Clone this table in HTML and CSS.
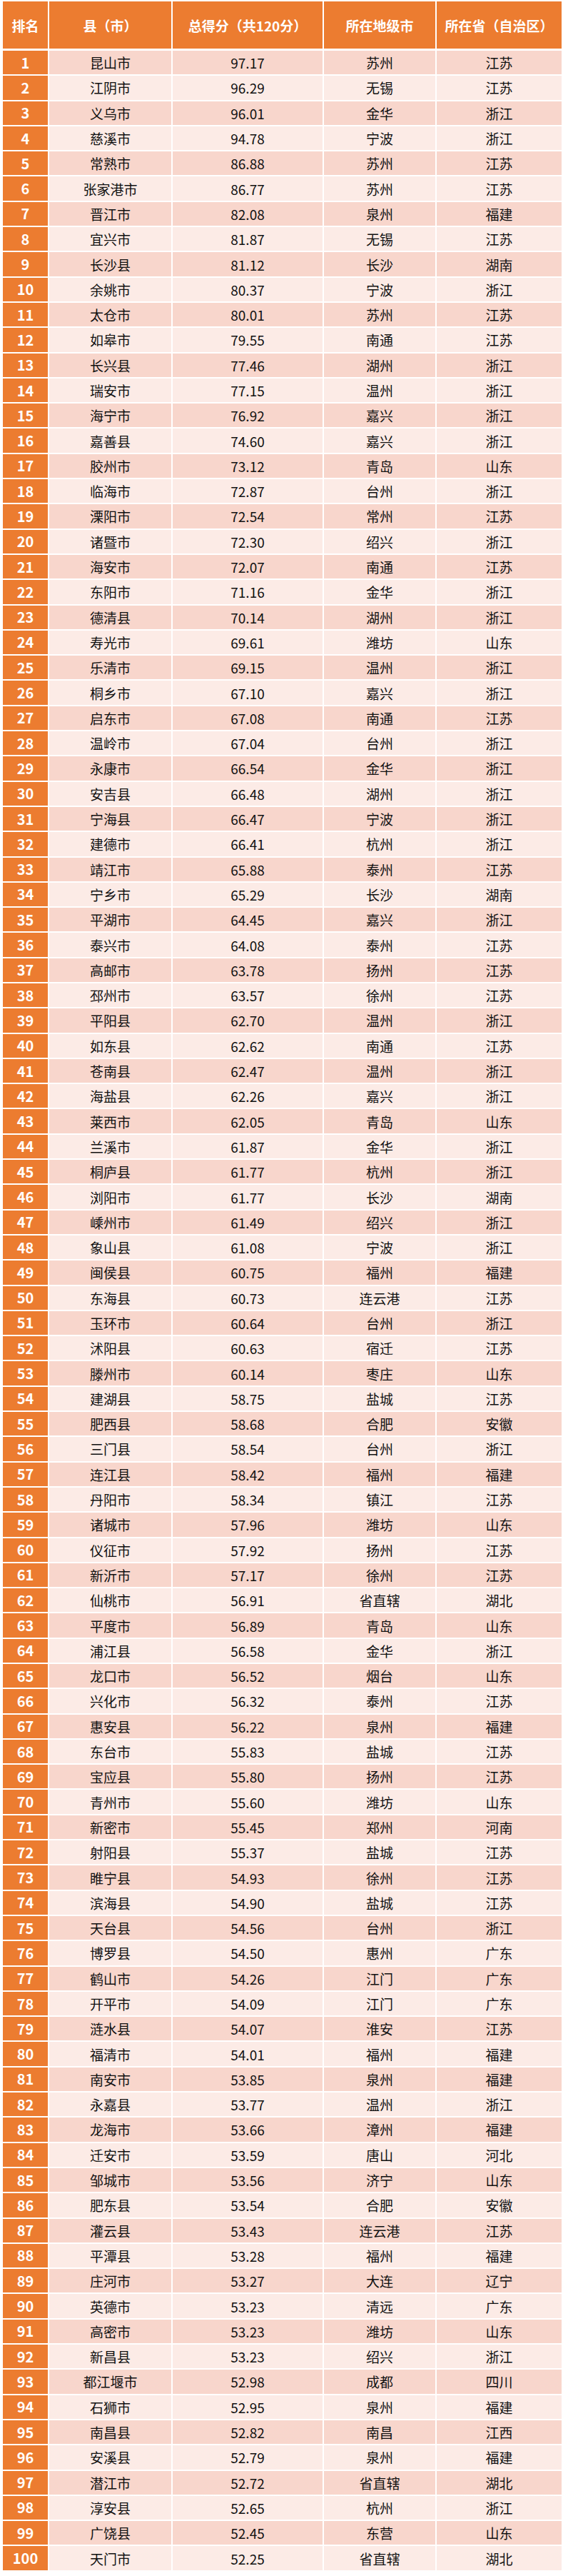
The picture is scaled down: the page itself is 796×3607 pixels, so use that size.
FILE: index.html
```html
<!DOCTYPE html>
<html lang="zh-CN">
<head>
<meta charset="utf-8">
<title>百强县排名</title>
<link rel="stylesheet" href="styles.css">
</head>
<body>
<div class="table">
<div class="row head"><div class="c">排名</div><div class="c">县（市）</div><div class="c">总得分（共120分）</div><div class="c">所在地级市</div><div class="c">所在省（自治区）</div></div>
<div class="row"><div class="c rank">1</div><div class="c">昆山市</div><div class="c">97.17</div><div class="c">苏州</div><div class="c">江苏</div></div>
<div class="row"><div class="c rank">2</div><div class="c">江阴市</div><div class="c">96.29</div><div class="c">无锡</div><div class="c">江苏</div></div>
<div class="row"><div class="c rank">3</div><div class="c">义乌市</div><div class="c">96.01</div><div class="c">金华</div><div class="c">浙江</div></div>
<div class="row"><div class="c rank">4</div><div class="c">慈溪市</div><div class="c">94.78</div><div class="c">宁波</div><div class="c">浙江</div></div>
<div class="row"><div class="c rank">5</div><div class="c">常熟市</div><div class="c">86.88</div><div class="c">苏州</div><div class="c">江苏</div></div>
<div class="row"><div class="c rank">6</div><div class="c">张家港市</div><div class="c">86.77</div><div class="c">苏州</div><div class="c">江苏</div></div>
<div class="row"><div class="c rank">7</div><div class="c">晋江市</div><div class="c">82.08</div><div class="c">泉州</div><div class="c">福建</div></div>
<div class="row"><div class="c rank">8</div><div class="c">宜兴市</div><div class="c">81.87</div><div class="c">无锡</div><div class="c">江苏</div></div>
<div class="row"><div class="c rank">9</div><div class="c">长沙县</div><div class="c">81.12</div><div class="c">长沙</div><div class="c">湖南</div></div>
<div class="row"><div class="c rank">10</div><div class="c">余姚市</div><div class="c">80.37</div><div class="c">宁波</div><div class="c">浙江</div></div>
<div class="row"><div class="c rank">11</div><div class="c">太仓市</div><div class="c">80.01</div><div class="c">苏州</div><div class="c">江苏</div></div>
<div class="row"><div class="c rank">12</div><div class="c">如皋市</div><div class="c">79.55</div><div class="c">南通</div><div class="c">江苏</div></div>
<div class="row"><div class="c rank">13</div><div class="c">长兴县</div><div class="c">77.46</div><div class="c">湖州</div><div class="c">浙江</div></div>
<div class="row"><div class="c rank">14</div><div class="c">瑞安市</div><div class="c">77.15</div><div class="c">温州</div><div class="c">浙江</div></div>
<div class="row"><div class="c rank">15</div><div class="c">海宁市</div><div class="c">76.92</div><div class="c">嘉兴</div><div class="c">浙江</div></div>
<div class="row"><div class="c rank">16</div><div class="c">嘉善县</div><div class="c">74.60</div><div class="c">嘉兴</div><div class="c">浙江</div></div>
<div class="row"><div class="c rank">17</div><div class="c">胶州市</div><div class="c">73.12</div><div class="c">青岛</div><div class="c">山东</div></div>
<div class="row"><div class="c rank">18</div><div class="c">临海市</div><div class="c">72.87</div><div class="c">台州</div><div class="c">浙江</div></div>
<div class="row"><div class="c rank">19</div><div class="c">溧阳市</div><div class="c">72.54</div><div class="c">常州</div><div class="c">江苏</div></div>
<div class="row"><div class="c rank">20</div><div class="c">诸暨市</div><div class="c">72.30</div><div class="c">绍兴</div><div class="c">浙江</div></div>
<div class="row"><div class="c rank">21</div><div class="c">海安市</div><div class="c">72.07</div><div class="c">南通</div><div class="c">江苏</div></div>
<div class="row"><div class="c rank">22</div><div class="c">东阳市</div><div class="c">71.16</div><div class="c">金华</div><div class="c">浙江</div></div>
<div class="row"><div class="c rank">23</div><div class="c">德清县</div><div class="c">70.14</div><div class="c">湖州</div><div class="c">浙江</div></div>
<div class="row"><div class="c rank">24</div><div class="c">寿光市</div><div class="c">69.61</div><div class="c">潍坊</div><div class="c">山东</div></div>
<div class="row"><div class="c rank">25</div><div class="c">乐清市</div><div class="c">69.15</div><div class="c">温州</div><div class="c">浙江</div></div>
<div class="row"><div class="c rank">26</div><div class="c">桐乡市</div><div class="c">67.10</div><div class="c">嘉兴</div><div class="c">浙江</div></div>
<div class="row"><div class="c rank">27</div><div class="c">启东市</div><div class="c">67.08</div><div class="c">南通</div><div class="c">江苏</div></div>
<div class="row"><div class="c rank">28</div><div class="c">温岭市</div><div class="c">67.04</div><div class="c">台州</div><div class="c">浙江</div></div>
<div class="row"><div class="c rank">29</div><div class="c">永康市</div><div class="c">66.54</div><div class="c">金华</div><div class="c">浙江</div></div>
<div class="row"><div class="c rank">30</div><div class="c">安吉县</div><div class="c">66.48</div><div class="c">湖州</div><div class="c">浙江</div></div>
<div class="row"><div class="c rank">31</div><div class="c">宁海县</div><div class="c">66.47</div><div class="c">宁波</div><div class="c">浙江</div></div>
<div class="row"><div class="c rank">32</div><div class="c">建德市</div><div class="c">66.41</div><div class="c">杭州</div><div class="c">浙江</div></div>
<div class="row"><div class="c rank">33</div><div class="c">靖江市</div><div class="c">65.88</div><div class="c">泰州</div><div class="c">江苏</div></div>
<div class="row"><div class="c rank">34</div><div class="c">宁乡市</div><div class="c">65.29</div><div class="c">长沙</div><div class="c">湖南</div></div>
<div class="row"><div class="c rank">35</div><div class="c">平湖市</div><div class="c">64.45</div><div class="c">嘉兴</div><div class="c">浙江</div></div>
<div class="row"><div class="c rank">36</div><div class="c">泰兴市</div><div class="c">64.08</div><div class="c">泰州</div><div class="c">江苏</div></div>
<div class="row"><div class="c rank">37</div><div class="c">高邮市</div><div class="c">63.78</div><div class="c">扬州</div><div class="c">江苏</div></div>
<div class="row"><div class="c rank">38</div><div class="c">邳州市</div><div class="c">63.57</div><div class="c">徐州</div><div class="c">江苏</div></div>
<div class="row"><div class="c rank">39</div><div class="c">平阳县</div><div class="c">62.70</div><div class="c">温州</div><div class="c">浙江</div></div>
<div class="row"><div class="c rank">40</div><div class="c">如东县</div><div class="c">62.62</div><div class="c">南通</div><div class="c">江苏</div></div>
<div class="row"><div class="c rank">41</div><div class="c">苍南县</div><div class="c">62.47</div><div class="c">温州</div><div class="c">浙江</div></div>
<div class="row"><div class="c rank">42</div><div class="c">海盐县</div><div class="c">62.26</div><div class="c">嘉兴</div><div class="c">浙江</div></div>
<div class="row"><div class="c rank">43</div><div class="c">莱西市</div><div class="c">62.05</div><div class="c">青岛</div><div class="c">山东</div></div>
<div class="row"><div class="c rank">44</div><div class="c">兰溪市</div><div class="c">61.87</div><div class="c">金华</div><div class="c">浙江</div></div>
<div class="row"><div class="c rank">45</div><div class="c">桐庐县</div><div class="c">61.77</div><div class="c">杭州</div><div class="c">浙江</div></div>
<div class="row"><div class="c rank">46</div><div class="c">浏阳市</div><div class="c">61.77</div><div class="c">长沙</div><div class="c">湖南</div></div>
<div class="row"><div class="c rank">47</div><div class="c">嵊州市</div><div class="c">61.49</div><div class="c">绍兴</div><div class="c">浙江</div></div>
<div class="row"><div class="c rank">48</div><div class="c">象山县</div><div class="c">61.08</div><div class="c">宁波</div><div class="c">浙江</div></div>
<div class="row"><div class="c rank">49</div><div class="c">闽侯县</div><div class="c">60.75</div><div class="c">福州</div><div class="c">福建</div></div>
<div class="row"><div class="c rank">50</div><div class="c">东海县</div><div class="c">60.73</div><div class="c">连云港</div><div class="c">江苏</div></div>
<div class="row"><div class="c rank">51</div><div class="c">玉环市</div><div class="c">60.64</div><div class="c">台州</div><div class="c">浙江</div></div>
<div class="row"><div class="c rank">52</div><div class="c">沭阳县</div><div class="c">60.63</div><div class="c">宿迁</div><div class="c">江苏</div></div>
<div class="row"><div class="c rank">53</div><div class="c">滕州市</div><div class="c">60.14</div><div class="c">枣庄</div><div class="c">山东</div></div>
<div class="row"><div class="c rank">54</div><div class="c">建湖县</div><div class="c">58.75</div><div class="c">盐城</div><div class="c">江苏</div></div>
<div class="row"><div class="c rank">55</div><div class="c">肥西县</div><div class="c">58.68</div><div class="c">合肥</div><div class="c">安徽</div></div>
<div class="row"><div class="c rank">56</div><div class="c">三门县</div><div class="c">58.54</div><div class="c">台州</div><div class="c">浙江</div></div>
<div class="row"><div class="c rank">57</div><div class="c">连江县</div><div class="c">58.42</div><div class="c">福州</div><div class="c">福建</div></div>
<div class="row"><div class="c rank">58</div><div class="c">丹阳市</div><div class="c">58.34</div><div class="c">镇江</div><div class="c">江苏</div></div>
<div class="row"><div class="c rank">59</div><div class="c">诸城市</div><div class="c">57.96</div><div class="c">潍坊</div><div class="c">山东</div></div>
<div class="row"><div class="c rank">60</div><div class="c">仪征市</div><div class="c">57.92</div><div class="c">扬州</div><div class="c">江苏</div></div>
<div class="row"><div class="c rank">61</div><div class="c">新沂市</div><div class="c">57.17</div><div class="c">徐州</div><div class="c">江苏</div></div>
<div class="row"><div class="c rank">62</div><div class="c">仙桃市</div><div class="c">56.91</div><div class="c">省直辖</div><div class="c">湖北</div></div>
<div class="row"><div class="c rank">63</div><div class="c">平度市</div><div class="c">56.89</div><div class="c">青岛</div><div class="c">山东</div></div>
<div class="row"><div class="c rank">64</div><div class="c">浦江县</div><div class="c">56.58</div><div class="c">金华</div><div class="c">浙江</div></div>
<div class="row"><div class="c rank">65</div><div class="c">龙口市</div><div class="c">56.52</div><div class="c">烟台</div><div class="c">山东</div></div>
<div class="row"><div class="c rank">66</div><div class="c">兴化市</div><div class="c">56.32</div><div class="c">泰州</div><div class="c">江苏</div></div>
<div class="row"><div class="c rank">67</div><div class="c">惠安县</div><div class="c">56.22</div><div class="c">泉州</div><div class="c">福建</div></div>
<div class="row"><div class="c rank">68</div><div class="c">东台市</div><div class="c">55.83</div><div class="c">盐城</div><div class="c">江苏</div></div>
<div class="row"><div class="c rank">69</div><div class="c">宝应县</div><div class="c">55.80</div><div class="c">扬州</div><div class="c">江苏</div></div>
<div class="row"><div class="c rank">70</div><div class="c">青州市</div><div class="c">55.60</div><div class="c">潍坊</div><div class="c">山东</div></div>
<div class="row"><div class="c rank">71</div><div class="c">新密市</div><div class="c">55.45</div><div class="c">郑州</div><div class="c">河南</div></div>
<div class="row"><div class="c rank">72</div><div class="c">射阳县</div><div class="c">55.37</div><div class="c">盐城</div><div class="c">江苏</div></div>
<div class="row"><div class="c rank">73</div><div class="c">睢宁县</div><div class="c">54.93</div><div class="c">徐州</div><div class="c">江苏</div></div>
<div class="row"><div class="c rank">74</div><div class="c">滨海县</div><div class="c">54.90</div><div class="c">盐城</div><div class="c">江苏</div></div>
<div class="row"><div class="c rank">75</div><div class="c">天台县</div><div class="c">54.56</div><div class="c">台州</div><div class="c">浙江</div></div>
<div class="row"><div class="c rank">76</div><div class="c">博罗县</div><div class="c">54.50</div><div class="c">惠州</div><div class="c">广东</div></div>
<div class="row"><div class="c rank">77</div><div class="c">鹤山市</div><div class="c">54.26</div><div class="c">江门</div><div class="c">广东</div></div>
<div class="row"><div class="c rank">78</div><div class="c">开平市</div><div class="c">54.09</div><div class="c">江门</div><div class="c">广东</div></div>
<div class="row"><div class="c rank">79</div><div class="c">涟水县</div><div class="c">54.07</div><div class="c">淮安</div><div class="c">江苏</div></div>
<div class="row"><div class="c rank">80</div><div class="c">福清市</div><div class="c">54.01</div><div class="c">福州</div><div class="c">福建</div></div>
<div class="row"><div class="c rank">81</div><div class="c">南安市</div><div class="c">53.85</div><div class="c">泉州</div><div class="c">福建</div></div>
<div class="row"><div class="c rank">82</div><div class="c">永嘉县</div><div class="c">53.77</div><div class="c">温州</div><div class="c">浙江</div></div>
<div class="row"><div class="c rank">83</div><div class="c">龙海市</div><div class="c">53.66</div><div class="c">漳州</div><div class="c">福建</div></div>
<div class="row"><div class="c rank">84</div><div class="c">迁安市</div><div class="c">53.59</div><div class="c">唐山</div><div class="c">河北</div></div>
<div class="row"><div class="c rank">85</div><div class="c">邹城市</div><div class="c">53.56</div><div class="c">济宁</div><div class="c">山东</div></div>
<div class="row"><div class="c rank">86</div><div class="c">肥东县</div><div class="c">53.54</div><div class="c">合肥</div><div class="c">安徽</div></div>
<div class="row"><div class="c rank">87</div><div class="c">灌云县</div><div class="c">53.43</div><div class="c">连云港</div><div class="c">江苏</div></div>
<div class="row"><div class="c rank">88</div><div class="c">平潭县</div><div class="c">53.28</div><div class="c">福州</div><div class="c">福建</div></div>
<div class="row"><div class="c rank">89</div><div class="c">庄河市</div><div class="c">53.27</div><div class="c">大连</div><div class="c">辽宁</div></div>
<div class="row"><div class="c rank">90</div><div class="c">英德市</div><div class="c">53.23</div><div class="c">清远</div><div class="c">广东</div></div>
<div class="row"><div class="c rank">91</div><div class="c">高密市</div><div class="c">53.23</div><div class="c">潍坊</div><div class="c">山东</div></div>
<div class="row"><div class="c rank">92</div><div class="c">新昌县</div><div class="c">53.23</div><div class="c">绍兴</div><div class="c">浙江</div></div>
<div class="row"><div class="c rank">93</div><div class="c">都江堰市</div><div class="c">52.98</div><div class="c">成都</div><div class="c">四川</div></div>
<div class="row"><div class="c rank">94</div><div class="c">石狮市</div><div class="c">52.95</div><div class="c">泉州</div><div class="c">福建</div></div>
<div class="row"><div class="c rank">95</div><div class="c">南昌县</div><div class="c">52.82</div><div class="c">南昌</div><div class="c">江西</div></div>
<div class="row"><div class="c rank">96</div><div class="c">安溪县</div><div class="c">52.79</div><div class="c">泉州</div><div class="c">福建</div></div>
<div class="row"><div class="c rank">97</div><div class="c">潜江市</div><div class="c">52.72</div><div class="c">省直辖</div><div class="c">湖北</div></div>
<div class="row"><div class="c rank">98</div><div class="c">淳安县</div><div class="c">52.65</div><div class="c">杭州</div><div class="c">浙江</div></div>
<div class="row"><div class="c rank">99</div><div class="c">广饶县</div><div class="c">52.45</div><div class="c">东营</div><div class="c">山东</div></div>
<div class="row"><div class="c rank">100</div><div class="c">天门市</div><div class="c">52.25</div><div class="c">省直辖</div><div class="c">湖北</div></div>
</div>
</body>
</html>
```
FILE: styles.css
```css
html, body {
  margin: 0;
  padding: 0;
  background: #ffffff;
}
body {
  font-family: "Noto Sans CJK SC", "Noto Sans", sans-serif;
  color: #111111;
}
.table {
  display: flex;
  flex-direction: column;
  gap: 2px;
  padding: 2px 0 7px 4px;
  width: 783px;
}
.row {
  display: grid;
  grid-template-columns: 63px 171px 210px 156px 175px;
  column-gap: 2px;
  height: 33.31px;
  font-size: 19px;
}
.c {
  display: flex;
  align-items: center;
  justify-content: center;
  white-space: nowrap;
  line-height: 1;
}
.row:nth-child(even) .c {
  background: #f8d6cc;
}
.row:nth-child(odd) .c {
  background: #fcebe6;
}
.row .c.rank {
  background: #ec7c30;
  color: #ffffff;
  font-weight: 700;
  font-size: 20px;
}
.row.head {
  height: 66px;
  margin-bottom: 1px;
}
.row.head .c {
  background: #ec7c30;
  color: #ffffff;
  font-weight: 700;
  font-size: 19px;
}
```
